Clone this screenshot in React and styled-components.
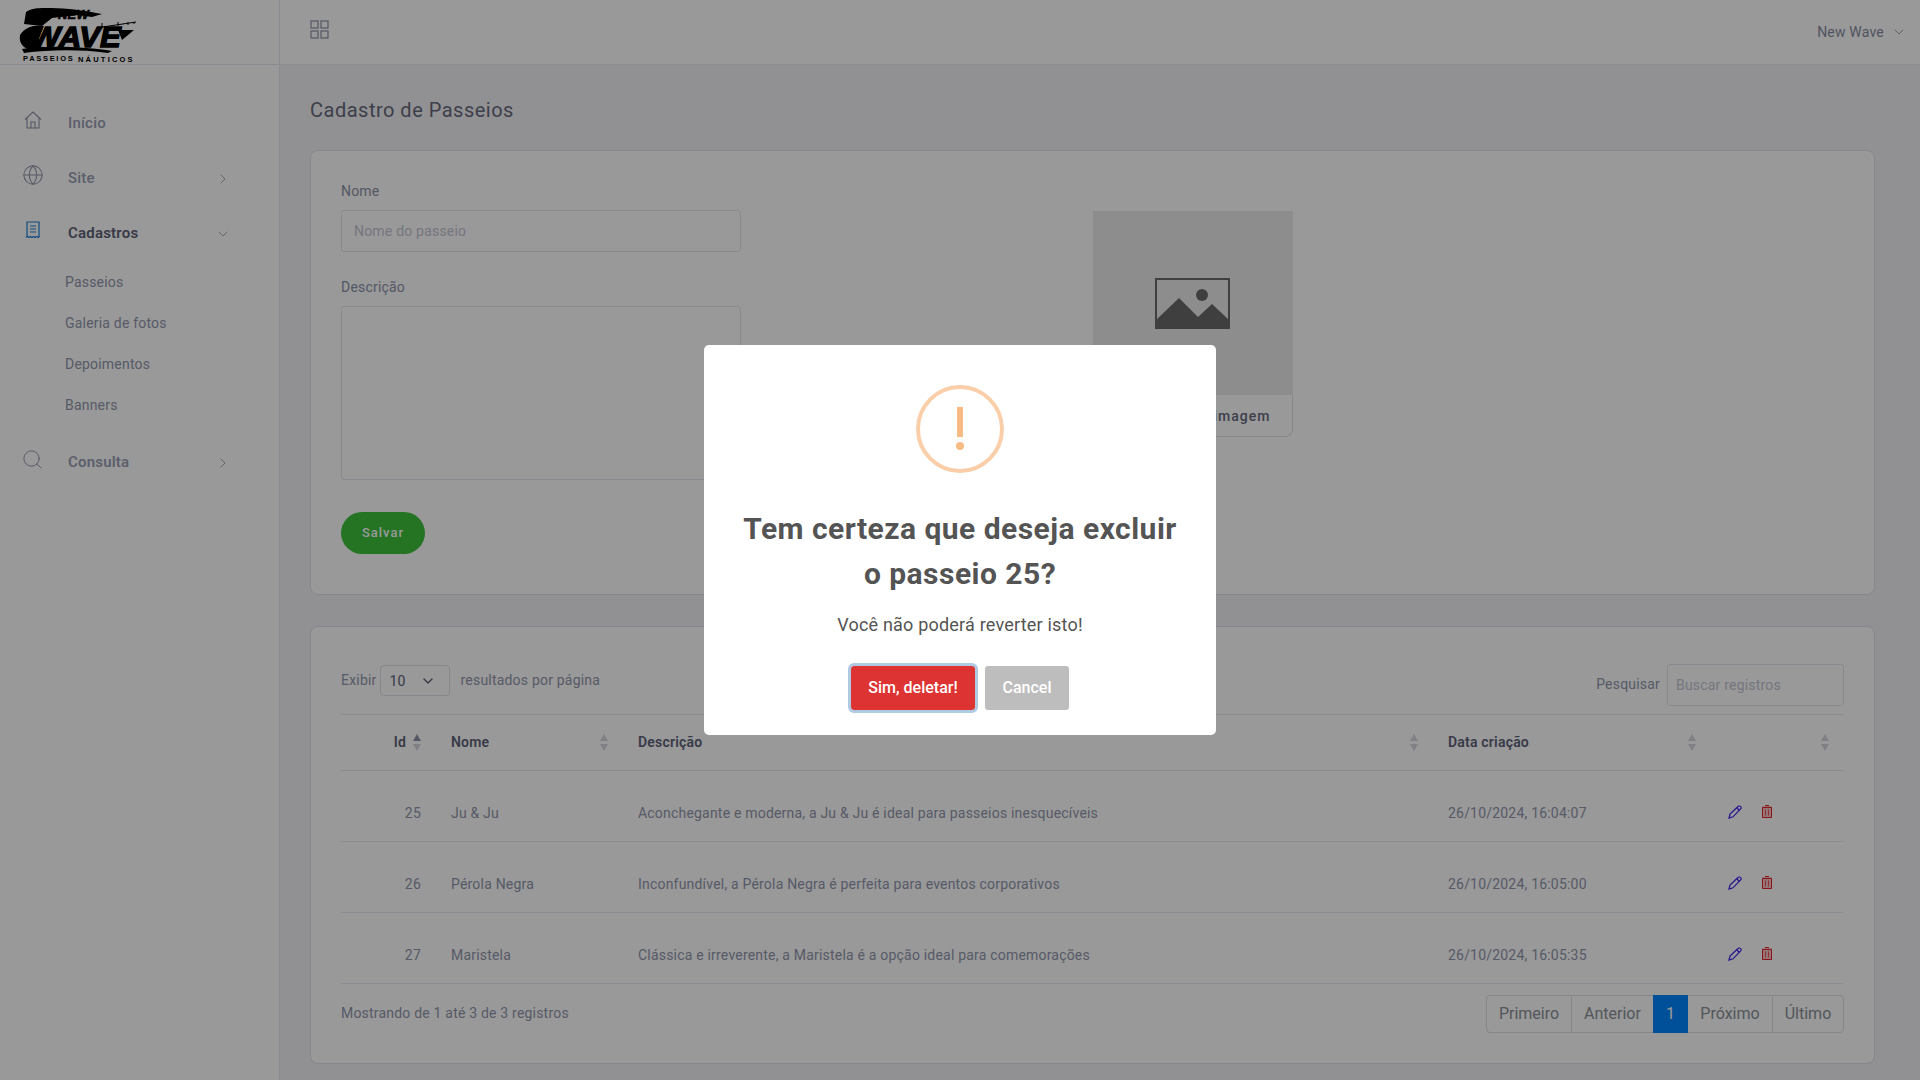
import React from 'react';
import styled, { createGlobalStyle } from 'styled-components';
import { ChevronDown, ChevronRight, Globe, Search } from 'lucide-react';

const GlobalStyle = createGlobalStyle`
  * { box-sizing: border-box; }
  html, body { margin: 0; height: 100%; overflow: hidden; }
  body {
    font-family: Roboto, "Liberation Sans", sans-serif;
    font-size: 14px;
    letter-spacing: 0.2px;
    color: #7e8299;
    background: #f2f2f5;
  }
`;

const Layout = styled.div`
  display: grid;
  grid-template-columns: 280px 1fr;
  height: 1080px;
`;

const Sidebar = styled.aside`
  background: #fff;
  border-right: 1px solid #e6e8f0;
`;

const LogoBar = styled.div`
  height: 65px;
  padding: 4px 0 0 18px;
  border-bottom: 1px solid #e6e8f0;
`;

const Nav = styled.nav`
  padding-top: 30px;
`;

const NavItem = styled.div`
  display: flex;
  align-items: center;
  height: 55px;
  padding: 0 48px 0 24px;
  font-size: 15px;
  font-weight: ${(p) => (p.$bold ? 600 : 500)};
  color: ${(p) => (p.$active ? '#5c6075' : '#9a9eb4')};
  margin-top: ${(p) => (p.$gap ? '8px' : 0)};
`;

const NavIcon = styled.span`
  display: flex;
  align-items: center;
  width: 44px;
  height: 22px;
  margin-bottom: 5px;
  color: ${(p) => (p.$active ? '#1c7ed6' : '#8f93a8')};
`;

const NavChevron = styled.span`
  display: flex;
  margin-left: auto;
  margin-top: 2px;
  color: #8f93a8;
`;

const SubMenu = styled.div`
  padding-top: 2px;
`;

const SubItem = styled.div`
  height: 41px;
  line-height: 41px;
  padding-left: 65px;
  color: #9296ac;
`;

const Main = styled.main`
  min-width: 0;
`;

const TopBar = styled.header`
  display: flex;
  align-items: center;
  justify-content: space-between;
  height: 65px;
  padding: 0 13px 0 30px;
  background: #fff;
  border-bottom: 1px solid #e6e8f0;
`;

const GridButton = styled.span`
  display: flex;
  margin-top: -6px;
  color: #9498ae;
`;

const UserMenu = styled.div`
  display: flex;
  align-items: center;
  gap: 7px;
  color: #878ba1;
`;

const Content = styled.div`
  padding: 0 45px 0 30px;
`;

const PageTitle = styled.h1`
  margin: 0;
  padding: 33px 0 0;
  height: 85px;
  font-size: 20px;
  line-height: 24px;
  font-weight: 400;
  letter-spacing: 0.5px;
  color: #666a7d;
`;

const Card = styled.section`
  background: #fff;
  border: 1px solid #dfe1ea;
  border-radius: 8px;
  padding: ${(p) => p.$padding};
  margin-bottom: 31px;
  height: ${(p) => p.$height};
`;

const FormGrid = styled.div`
  display: grid;
  grid-template-columns: 1fr 1fr;
`;

const Label = styled.label`
  display: block;
  line-height: 20px;
  margin-bottom: 9px;
  color: #8d91a7;
`;

const TextInput = styled.div`
  width: ${(p) => p.$width || '400px'};
  height: 42px;
  line-height: 40px;
  padding: 0 ${(p) => p.$px || '12px'};
  border: 1px solid #e4e6ef;
  border-radius: 3px;
  color: #c4c6d2;
  margin-bottom: ${(p) => p.$mb || 0};
`;

const TextArea = styled.div`
  width: 400px;
  height: 174px;
  border: 1px solid #e4e6ef;
  border-radius: 3px;
  margin-bottom: 32px;
`;

const SaveButton = styled.button`
  width: 84px;
  height: 42px;
  padding: 0 0 2px;
  border: 0;
  border-radius: 21px;
  background: #3cc13b;
  color: #fff;
  font: 500 13px Roboto, sans-serif;
  letter-spacing: 1px;
`;

const ImageColumn = styled.div`
  width: 200px;
  margin-top: 30px;
`;

const ImageBox = styled.div`
  display: flex;
  align-items: center;
  justify-content: center;
  height: 184px;
  background: #ececec;
  color: #6a6a6a;
`;

const ImageButton = styled.div`
  height: 42px;
  line-height: 40px;
  text-align: right;
  padding-right: 21px;
  border: 1px solid #e0e2ec;
  border-top-color: transparent;
  border-radius: 0 0 8px 8px;
  font-size: 14px;
  font-weight: 500;
  letter-spacing: 1px;
  color: #666a7d;
`;

const Toolbar = styled.div`
  display: flex;
  justify-content: space-between;
  height: 50px;
`;

const PerPage = styled.div`
  display: flex;
  align-items: center;
  height: 31px;
  margin-top: 1px;
  color: #9296ac;
`;

const RaisedText = styled.span`
  margin-top: -2px;
`;

const PerPageSelect = styled.div`
  display: flex;
  align-items: center;
  justify-content: space-between;
  width: 70px;
  height: 31px;
  margin: 0 11px 0 3px;
  padding: 0 13px 0 9px;
  border: 1px solid #dfe1ea;
  border-radius: 4px;
  color: #5e6278;
`;

const SearchBox = styled.div`
  display: flex;
  align-items: center;
  gap: 7px;
  height: 42px;
  color: #9296ac;
`;

const Table = styled.table`
  width: 100%;
  border-collapse: collapse;
  table-layout: fixed;
  border-top: 1px solid #e9ebf3;
`;

const Th = styled.th`
  position: relative;
  height: 56px;
  padding: ${(p) => (p.$right ? '0 30px 2px 0' : '0 15px 2px')};
  text-align: ${(p) => (p.$right ? 'right' : 'left')};
  font-weight: 600;
  color: #5e6278;
  border-bottom: 1px solid #e4e6ef;
`;

const SortMark = styled.span`
  position: absolute;
  right: 15px;
  top: 19px;
  display: flex;
  color: #d6d7de;
`;

const Td = styled.td`
  height: 71px;
  padding: 14px 15px 0;
  text-align: ${(p) => (p.$right ? 'right' : 'left')};
  color: #9296ac;
  border-bottom: 1px solid #e9ebf3;
`;

const Actions = styled.div`
  display: flex;
  align-items: center;
  gap: 20px;
  padding-left: 2px;
  margin-top: -3px;
`;

const Footer = styled.div`
  display: flex;
  align-items: center;
  justify-content: space-between;
  margin-top: 11px;
  height: 38px;
  color: #9296ac;
`;

const Pager = styled.div`
  display: flex;
  height: 38px;
  border: 1px solid #dee0e6;
  border-radius: 4px;
  font-size: 16px;
  letter-spacing: 0;
`;

const PagerButton = styled.div`
  width: ${(p) => p.$w}px;
  text-align: center;
  color: ${(p) => (p.$active ? '#fff' : '#8b9097')};
  background: ${(p) => (p.$active ? '#0084ff' : 'transparent')};
  border-left: ${(p) => (p.$line ? '1px solid #dee0e6' : '0')};
  margin: ${(p) => (p.$active ? '-1px 0' : 0)};
  height: ${(p) => (p.$active ? '38px' : 'auto')};
  line-height: ${(p) => (p.$active ? '38px' : '36px')};
`;

const Overlay = styled.div`
  position: fixed;
  inset: 0;
  display: flex;
  align-items: center;
  justify-content: center;
  background: rgba(0, 0, 0, 0.4);
`;

const Modal = styled.div`
  display: flex;
  flex-direction: column;
  align-items: center;
  width: 512px;
  height: 390px;
  padding-top: 40px;
  background: #fff;
  border-radius: 5px;
`;

const WarningRing = styled.div`
  display: flex;
  align-items: center;
  justify-content: center;
  width: 88px;
  height: 88px;
  border: 4px solid #facea8;
  border-radius: 50%;
  color: #f8bb86;
`;

const ModalTitle = styled.h2`
  margin: 33px 0 0;
  width: 440px;
  text-align: center;
  font-size: 30px;
  line-height: 45px;
  font-weight: 700;
  letter-spacing: 0.47px;
  color: #545454;
`;

const ModalText = styled.p`
  margin: 15px 0 0;
  font-size: 18px;
  line-height: 27px;
  color: #545454;
`;

const ModalButtons = styled.div`
  display: flex;
  gap: 10px;
  margin-top: 28px;
`;

const ModalButton = styled.button`
  height: 44px;
  width: ${(p) => p.$w}px;
  padding: 0 0 2px;
  border: 0;
  border-radius: 3px;
  background: ${(p) => p.$bg};
  color: #fff;
  font: 500 16px Roboto, sans-serif;
  outline: ${(p) => (p.$focus ? '3px solid rgba(100, 150, 200, 0.5)' : 'none')};
`;

const LogoMark = () => (
  <svg width="122" height="58" viewBox="0 0 122 58">
    <path d="M8 8 C14 3 26 4 34 4 C46 4 70 7 84 10 L74 13 L60 11 L34 14 L24 22 L6 20 Z" fill="#000" />
    <path d="M2 31 C8 22 16 21 26 22 L18 42 L34 44 L20 46 C10 48 0 42 2 31 Z" fill="#000" />
    <path d="M4 45 C30 41 70 43 94 47 L90 49 C60 45 30 46 6 49 Z" fill="#000" />
    <path d="M78 24 L118 18 M84 24 V19 M100 22 V18 M110 21 V18 M116 20 V18" stroke="#000" strokeWidth="1" fill="none" />
    <path d="M100 26 L116 26 L104 36 Z" fill="#000" />
    <text x="40" y="15" fontFamily="Liberation Sans" fontWeight="700" fontStyle="italic" fontSize="13" fill="#000" stroke="#000" strokeWidth="0.5">NEW</text>
    <text x="13" y="43" fontFamily="Liberation Sans" fontWeight="700" fontStyle="italic" fontSize="29" fill="#000" stroke="#000" strokeWidth="1.4" textLength="90" lengthAdjust="spacingAndGlyphs">WAVE</text>
    <text x="5" y="57" fontFamily="Liberation Sans" fontWeight="700" fontSize="7.5" letterSpacing="1.7" fill="#000">PASSEIOS</text>
    <text x="60" y="57.5" fontFamily="Liberation Sans" fontWeight="700" fontSize="7.5" letterSpacing="2.2" fill="#000">NÁUTICOS</text>
  </svg>
);

const HomeIcon = () => (
  <svg width="18" height="18" viewBox="0 0 18 18" fill="none" stroke="currentColor" strokeWidth="1.1">
    <path d="M1 8.5 L9 1 L17 8.5" />
    <path d="M3 7 V17 H15 V7" />
    <path d="M7 17 V11 H11 V17" />
  </svg>
);

const ReceiptIcon = () => (
  <svg width="18" height="18" viewBox="0 0 18 18" fill="none" stroke="currentColor" strokeWidth="1.2">
    <path d="M3 16 V1 H15 V16" />
    <path d="M6 5 H12 M6 8 H12 M6 11 H12" />
    <path d="M2 16.5 l1.5 -1 l1.5 1 l1.5 -1 l1.5 1 l1.5 -1 l1.5 1 l1.5 -1 l1.5 1 l1.5 -1" />
  </svg>
);

const GridIcon = () => (
  <svg width="19" height="19" viewBox="0 0 19 19" fill="none" stroke="currentColor" strokeWidth="1.3">
    <rect x="1" y="1" width="7" height="7" />
    <rect x="11" y="1" width="7" height="7" />
    <rect x="1" y="11" width="7" height="7" />
    <rect x="11" y="11" width="7" height="7" />
  </svg>
);

const PictureIcon = () => (
  <svg width="75" height="51" viewBox="0 0 75 51">
    <rect x="1" y="1" width="73" height="49" fill="none" stroke="currentColor" strokeWidth="2" />
    <circle cx="47" cy="17" r="6" fill="currentColor" />
    <path d="M1 42 L24 20 L43 39 L57 26 L74 42 V50 H1 Z" fill="currentColor" />
  </svg>
);

const SortIcon = ({ up }) => (
  <svg width="8" height="17" viewBox="0 0 8 17">
    <path d="M4 0 L8 7 H0 Z" fill={up ? '#8f93a8' : 'currentColor'} />
    <path d="M4 17 L8 10 H0 Z" fill="currentColor" />
  </svg>
);

const PencilIcon = () => (
  <svg width="14" height="14" viewBox="0 0 14 14" fill="none" stroke="#3a1ff0" strokeWidth="1.2">
    <path d="M1 13 L2 9 L10 1.5 C11 .6 12.3 1 13 2 C13.4 2.8 13 3.6 12.4 4.2 L5 11.8 Z" />
    <path d="M9 3 L11.5 5.5" />
  </svg>
);

const TrashIcon = () => (
  <svg width="10" height="13" viewBox="0 0 10 13">
    <path d="M3 0 H7 V1 H10 V13 H0 V1 H3 Z" fill="#f8c4c4" />
    <path d="M.5 2.5 H9.5 V12.5 H.5 Z" fill="none" stroke="#e8222e" strokeWidth="1" />
    <path d="M3 .5 H7" stroke="#e8222e" strokeWidth="1" />
    <path d="M3.5 4.5 V10.5 M6.5 4.5 V10.5" stroke="#e8222e" strokeOpacity="0.7" strokeWidth="1" />
  </svg>
);

const rows = [
  { id: 25, nome: 'Ju & Ju', desc: 'Aconchegante e moderna, a Ju & Ju é ideal para passeios inesquecíveis', data: '26/10/2024, 16:04:07' },
  { id: 26, nome: 'Pérola Negra', desc: 'Inconfundível, a Pérola Negra é perfeita para eventos corporativos', data: '26/10/2024, 16:05:00' },
  { id: 27, nome: 'Maristela', desc: 'Clássica e irreverente, a Maristela é a opção ideal para comemorações', data: '26/10/2024, 16:05:35' },
];

export default function App() {
  return (
    <>
      <GlobalStyle />
      <Layout>
        <Sidebar>
          <LogoBar>
            <LogoMark />
          </LogoBar>
          <Nav>
            <NavItem>
              <NavIcon><HomeIcon /></NavIcon>Início
            </NavItem>
            <NavItem>
              <NavIcon><Globe size={22} strokeWidth={1.1} style={{ marginLeft: -2 }} /></NavIcon>Site
              <NavChevron><ChevronRight size={16} strokeWidth={1.2} /></NavChevron>
            </NavItem>
            <NavItem $bold $active>
              <NavIcon $active><ReceiptIcon /></NavIcon>Cadastros
              <NavChevron><ChevronDown size={16} strokeWidth={1.2} /></NavChevron>
            </NavItem>
            <SubMenu>
              <SubItem>Passeios</SubItem>
              <SubItem>Galeria de fotos</SubItem>
              <SubItem>Depoimentos</SubItem>
              <SubItem>Banners</SubItem>
            </SubMenu>
            <NavItem $bold $gap>
              <NavIcon><Search size={23} strokeWidth={1} style={{ marginLeft: -3 }} /></NavIcon>Consulta
              <NavChevron><ChevronRight size={16} strokeWidth={1.2} /></NavChevron>
            </NavItem>
          </Nav>
        </Sidebar>
        <Main>
          <TopBar>
            <GridButton><GridIcon /></GridButton>
            <UserMenu>
              New Wave <ChevronDown size={16} strokeWidth={1.2} />
            </UserMenu>
          </TopBar>
          <Content>
            <PageTitle>Cadastro de Passeios</PageTitle>
            <Card $padding="30px 30px 0" $height="445px">
              <FormGrid>
                <div>
                  <Label>Nome</Label>
                  <TextInput $mb="25px">Nome do passeio</TextInput>
                  <Label>Descrição</Label>
                  <TextArea />
                  <SaveButton>Salvar</SaveButton>
                </div>
                <ImageColumn>
                  <ImageBox><PictureIcon /></ImageBox>
                  <ImageButton>Selecionar imagem</ImageButton>
                </ImageColumn>
              </FormGrid>
            </Card>
            <Card $padding="37px 30px 0" $height="438px">
              <Toolbar>
                <PerPage>
                  <RaisedText>Exibir</RaisedText>
                  <PerPageSelect>10 <ChevronDown size={16} strokeWidth={2} /></PerPageSelect>
                  <RaisedText>resultados por página</RaisedText>
                </PerPage>
                <SearchBox>
                  <RaisedText>Pesquisar</RaisedText>
                  <TextInput $width="177px" $px="8px">Buscar registros</TextInput>
                </SearchBox>
              </Toolbar>
              <Table>
                <colgroup>
                  <col style={{ width: 95 }} />
                  <col style={{ width: 187 }} />
                  <col style={{ width: 810 }} />
                  <col style={{ width: 278 }} />
                  <col />
                </colgroup>
                <thead>
                  <tr>
                    <Th $right>Id<SortMark><SortIcon up /></SortMark></Th>
                    <Th>Nome<SortMark><SortIcon /></SortMark></Th>
                    <Th>Descrição<SortMark><SortIcon /></SortMark></Th>
                    <Th>Data criação<SortMark><SortIcon /></SortMark></Th>
                    <Th><SortMark><SortIcon /></SortMark></Th>
                  </tr>
                </thead>
                <tbody>
                  {rows.map((r) => (
                    <tr key={r.id}>
                      <Td $right>{r.id}</Td>
                      <Td>{r.nome}</Td>
                      <Td>{r.desc}</Td>
                      <Td>{r.data}</Td>
                      <Td>
                        <Actions>
                          <PencilIcon />
                          <TrashIcon />
                        </Actions>
                      </Td>
                    </tr>
                  ))}
                </tbody>
              </Table>
              <Footer>
                <RaisedText>Mostrando de 1 até 3 de 3 registros</RaisedText>
                <Pager>
                  <PagerButton $w={84}>Primeiro</PagerButton>
                  <PagerButton $w={82} $line>Anterior</PagerButton>
                  <PagerButton $w={35} $active>1</PagerButton>
                  <PagerButton $w={84}>Próximo</PagerButton>
                  <PagerButton $w={71} $line>Último</PagerButton>
                </Pager>
              </Footer>
            </Card>
          </Content>
        </Main>
      </Layout>
      <Overlay>
        <Modal>
          <WarningRing>
            <svg width="10" height="44" viewBox="0 0 10 44" fill="currentColor">
              <path d="M2 0 H8 V30 H2 Z" />
              <circle cx="5" cy="39" r="4" />
            </svg>
          </WarningRing>
          <ModalTitle>Tem certeza que deseja excluir o passeio 25?</ModalTitle>
          <ModalText>Você não poderá reverter isto!</ModalText>
          <ModalButtons>
            <ModalButton $w={124} $bg="#dd3333" $focus>Sim, deletar!</ModalButton>
            <ModalButton $w={84} $bg="#bdbdbd">Cancel</ModalButton>
          </ModalButtons>
        </Modal>
      </Overlay>
    </>
  );
}
